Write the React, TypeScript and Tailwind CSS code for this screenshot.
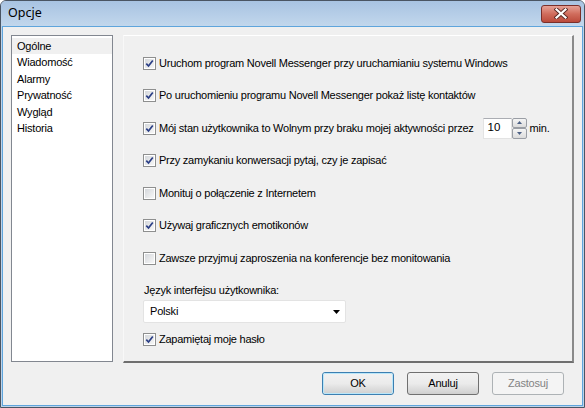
import React from "react";

const font = { fontFamily: '"Liberation Sans", Arial, sans-serif' };

function Check({ checked }: { checked: boolean }) {
  return (
    <div className="w-[13px] h-[13px] shrink-0 border border-[#8e8f8f] bg-white p-[1px]">
      <div className="w-full h-full bg-gradient-to-br from-[#d5d8dc] to-[#f7f7f7] relative">
        {checked && (
          <svg width="9" height="9" viewBox="0 0 9 9" className="absolute left-0 top-0">
            <path d="M1.3 4.6 L3.5 7 L7.8 1.4" fill="none" stroke="#2b3f86" strokeWidth="1.7" />
          </svg>
        )}
      </div>
    </div>
  );
}

function Row({ checked, children }: { checked: boolean; children: React.ReactNode }) {
  return (
    <div className="h-[20px] flex items-center">
      <Check checked={checked} />
      <span className="ml-[3px] text-[11px] tracking-[-0.24px] text-black whitespace-nowrap">{children}</span>
    </div>
  );
}

function Btn({ children, kind }: { children: React.ReactNode; kind: "default" | "normal" | "disabled" }) {
  const cls =
    kind === "default"
      ? "border-[#3c7fb1] text-black bg-gradient-to-b from-[#f2f2f2] via-[#ebebeb] to-[#cfcfcf]"
      : kind === "normal"
      ? "border-[#707070] text-black bg-gradient-to-b from-[#f2f2f2] via-[#ebebeb] to-[#cfcfcf]"
      : "border-[#adb2b5] text-[#838383] bg-[#f4f4f4]";
  return (
    <div className={`w-[72px] h-[23px] border rounded-[3px] flex items-center justify-center text-[11px] tracking-[-0.2px] ${cls}`}>
      {kind === "default" ? (
        <div className="w-full h-full rounded-[2px] border border-[#b9e6f9] flex items-center justify-center">{children}</div>
      ) : (
        children
      )}
    </div>
  );
}

export default function App() {
  return (
    <div style={font} className="w-[585px] h-[408px] flex flex-col bg-[#bcd3ea] border border-[#4a5563] rounded-t-[6px] overflow-hidden">
      <div className="h-[25px] shrink-0 flex items-center justify-between pl-[7px] pr-[3px] bg-gradient-to-b from-[#a8c3e2] to-[#c2d7ec]">
        <span className="text-[12.5px] text-black" style={{ fontFamily: '"Noto Sans", "Open Sans", sans-serif' }}>
          Opcje
        </span>
        <div className="w-[40px] h-[18px] rounded-[3px] border border-[#7a2f2a] bg-gradient-to-b from-[#e6a196] via-[#d06c5c] to-[#bb4a3b] flex items-center justify-center">
          <svg width="14" height="11" viewBox="0 0 14 11">
            <path d="M2.5 1.5 L11.5 9.5 M11.5 1.5 L2.5 9.5" stroke="#5a2a25" strokeWidth="4" strokeLinecap="square" />
            <path d="M2.5 1.5 L11.5 9.5 M11.5 1.5 L2.5 9.5" stroke="#ffffff" strokeWidth="2.2" strokeLinecap="square" />
          </svg>
        </div>
      </div>
      <div className="flex-1 mx-[1px] mb-[1px] bg-[#f0f0f0] border border-[#5fa5dc] flex flex-col pt-[8px] pl-[8px] pr-[8px]">
        <div className="flex gap-[10px] h-[327px]">
          <div className="w-[102px] h-[327px] bg-white border border-[#828790] pt-[2px]">
            {["Ogólne", "Wiadomość", "Alarmy", "Prywatność", "Wygląd", "Historia"].map((t, i) => (
              <div
                key={t}
                className={`h-[16.4px] flex items-center pl-[5px] text-[11px] tracking-[-0.2px] text-black ${i === 0 ? "bg-[#f0f0f0]" : ""}`}
              >
                {t}
              </div>
            ))}
          </div>
          <div className="flex-1 h-[328px] border-t border-l border-t-white border-l-[#f8f8f8] border-r-2 border-b-2 border-r-[#8a8a8a] border-b-[#6f6f6f] pl-[19px] pt-[17px] flex flex-col">
            <div className="flex flex-col gap-[12.5px]">
              <Row checked>Uruchom program Novell Messenger przy uruchamianiu systemu Windows</Row>
              <Row checked>Po uruchomieniu programu Novell Messenger pokaż listę kontaktów</Row>
              <div className="h-[20px] flex items-center">
                <Check checked />
                <span className="ml-[3px] text-[11px] tracking-[-0.24px] text-black whitespace-nowrap">
                  Mój stan użytkownika to Wolnym przy braku mojej aktywności przez
                </span>
                <div className="ml-[9px] flex items-center">
                  <div className="w-[29px] h-[21px] bg-white border border-[#e3e3e3] border-t-[#abadb3] flex items-center pl-[4px] text-[11.5px] text-black">
                    10
                  </div>
                  <div className="w-[15px] h-[21px] flex flex-col">
                    <div className="h-[10px] border border-[#9a9ea5] rounded-[2px] bg-gradient-to-b from-[#f5f5f5] to-[#dcdcdc] flex items-center justify-center">
                      <svg width="5" height="3" viewBox="0 0 5 3"><path d="M0 3 L2.5 0 L5 3 Z" fill="#4d6185" /></svg>
                    </div>
                    <div className="h-[11px] border border-[#9a9ea5] rounded-[2px] bg-gradient-to-b from-[#f5f5f5] to-[#dcdcdc] flex items-center justify-center">
                      <svg width="5" height="3" viewBox="0 0 5 3"><path d="M0 0 L2.5 3 L5 0 Z" fill="#4d6185" /></svg>
                    </div>
                  </div>
                  <span className="ml-[3px] text-[11px] tracking-[-0.2px] text-black">min.</span>
                </div>
              </div>
              <Row checked>Przy zamykaniu konwersacji pytaj, czy je zapisać</Row>
              <Row checked={false}>Monituj o połączenie z Internetem</Row>
              <Row checked>Używaj graficznych emotikonów</Row>
              <Row checked={false}>Zawsze przyjmuj zaproszenia na konferencje bez monitowania</Row>
            </div>
            <div className="mt-[14px] h-[16px] flex items-center text-[11px] tracking-[-0.24px] text-black pl-[1px]">
              Język interfejsu użytkownika:
            </div>
            <div className="mt-[2px] w-[203px] h-[23px] bg-white border border-[#e3e3e3] rounded-[2px] flex items-center justify-between pl-[6px] pr-[5px] text-[11px] tracking-[-0.2px] text-black">
              <span>Polski</span>
              <svg width="7" height="4" viewBox="0 0 7 4"><path d="M0 0 L7 0 L3.5 4 Z" fill="#000" /></svg>
            </div>
            <div className="mt-[6px]">
              <Row checked>Zapamiętaj moje hasło</Row>
            </div>
          </div>
        </div>
        <div className="mt-[10px] flex justify-end gap-[13px] pr-[10px]">
          <Btn kind="default">OK</Btn>
          <Btn kind="normal">Anuluj</Btn>
          <Btn kind="disabled">Zastosuj</Btn>
        </div>
      </div>
    </div>
  );
}
